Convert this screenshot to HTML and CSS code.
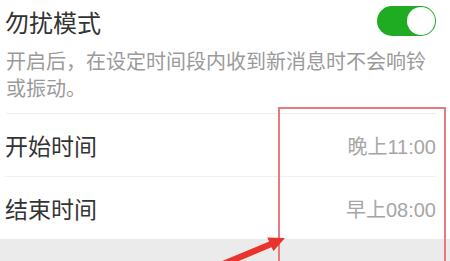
FILE: index.html
```html
<!DOCTYPE html>
<html lang="zh-CN">
<head>
<meta charset="utf-8">
<link rel="stylesheet" href="styles.css">
</head>
<body>
<div class="page">
  <div class="panel">
    <div class="head-row">
      <span class="title">勿扰模式</span>
      <span class="switch"><span class="knob"></span></span>
    </div>
    <p class="desc">开启后，在设定时间段内收到新消息时不会响铃或振动。</p>
    <div class="row">
      <span class="label">开始时间</span>
      <span class="value">晚上11:00</span>
    </div>
    <div class="row">
      <span class="label">结束时间</span>
      <span class="value">早上08:00</span>
    </div>
  </div>
  <div class="grey"></div>
  <div class="highlight"></div>
  <svg class="arrow" width="450" height="261" viewBox="0 0 450 261">
    <polygon fill="#e8342c" points="285,238 273.5,251 271.5,247.2 196,279 193.5,273 269.2,241.4 267.2,237.5"/>
  </svg>
</div>
</body>
</html>
```
FILE: styles.css
```css
html, body {
  margin: 0;
  padding: 0;
  background: #ffffff;
}
.page {
  position: relative;
  width: 450px;
  height: 261px;
  overflow: hidden;
  font-family: "Noto Sans CJK SC", "Noto Sans", sans-serif;
}
.panel {
  padding: 0 14px 0 5px;
  background: #fff;
}
.head-row {
  height: 43px;
  display: flex;
  align-items: center;
  justify-content: space-between;
}
.title {
  font-size: 24px;
  color: #333;
  line-height: 1;
}
.switch {
  width: 59px;
  height: 30px;
  border-radius: 15px;
  background: #1fab22;
  display: flex;
  align-items: center;
  justify-content: flex-end;
  padding: 0 1px;
  box-sizing: border-box;
  margin-top: -2px;
}
.knob {
  width: 28px;
  height: 28px;
  border-radius: 50%;
  background: #fff;
}
.desc {
  margin: 4px 0 0 1px;
  font-size: 20px;
  line-height: 27px;
  color: #9a9a9a;
  padding-bottom: 12px;
  border-bottom: 1px solid #eeeeee;
}
.row {
  height: 62px;
  display: flex;
  align-items: center;
  justify-content: space-between;
  border-bottom: 1px solid #f0f0f0;
}
.row:last-child {
  border-bottom: none;
}
.label {
  font-size: 23px;
  color: #333;
}
.value {
  font-size: 20px;
  color: #a6a6a6;
  font-family: "Liberation Sans", "Noto Sans CJK SC", sans-serif;
}
.grey {
  height: 40px;
  background: #ebebeb;
}
.highlight {
  position: absolute;
  left: 278px;
  top: 107px;
  width: 168px;
  height: 200px;
  border: 2px solid #e77a7a;
  box-sizing: border-box;
}
.arrow {
  position: absolute;
  left: 0;
  top: 0;
}
```
